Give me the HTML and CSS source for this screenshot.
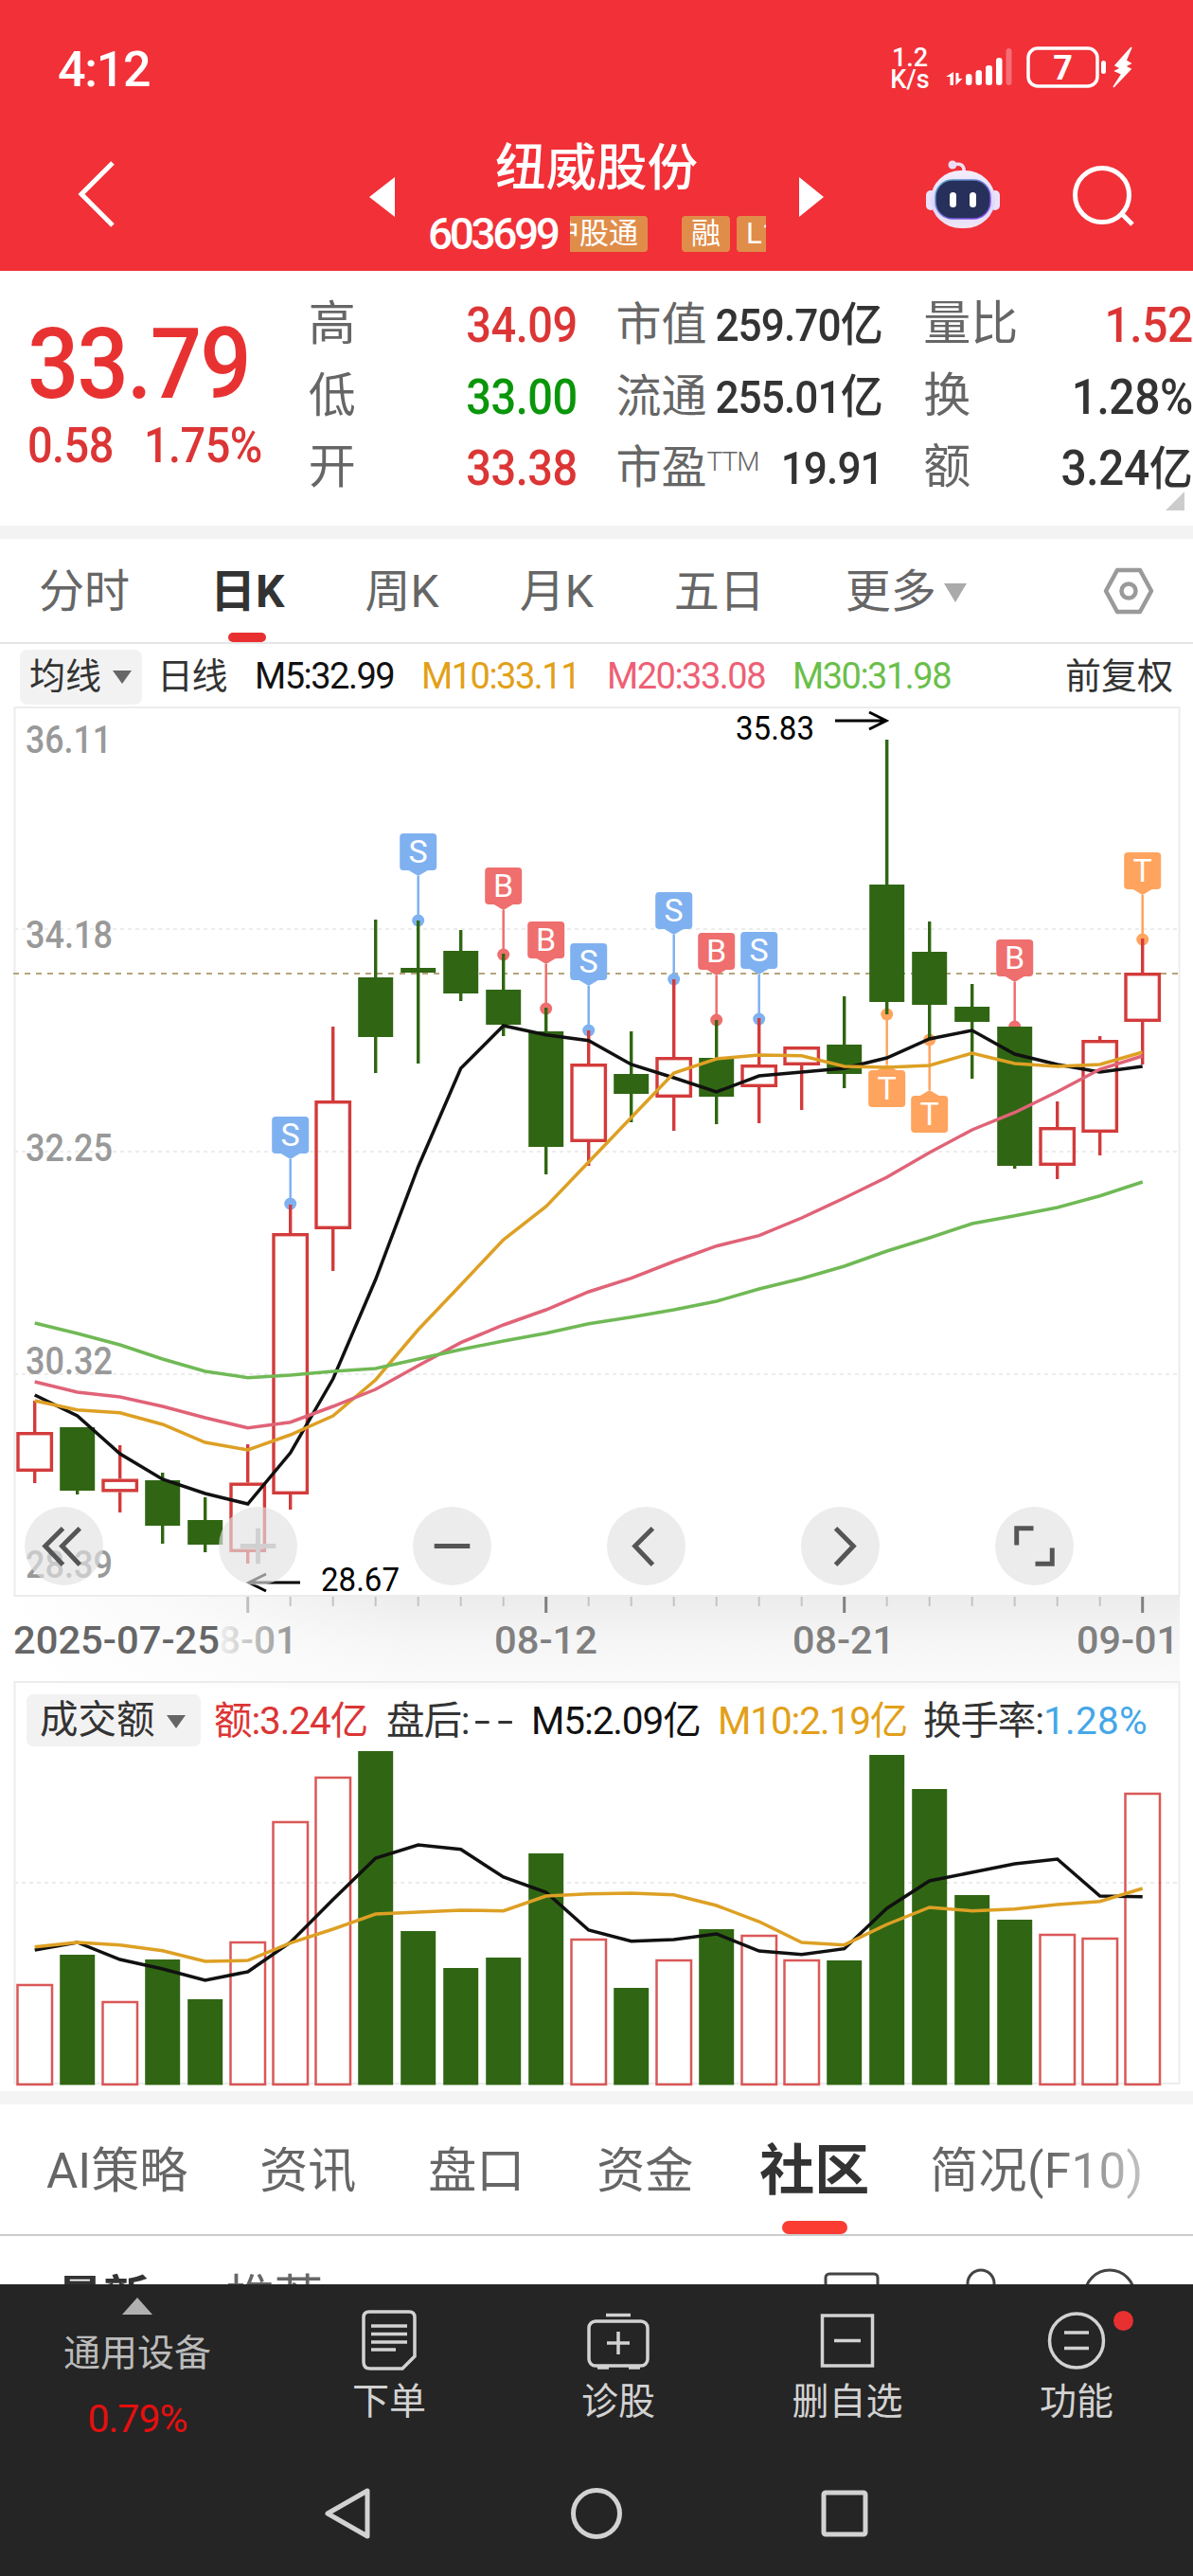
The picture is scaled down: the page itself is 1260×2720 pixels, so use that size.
FILE: index.html
```html
<!DOCTYPE html>
<html lang="zh-CN">
<head>
    <meta charset="UTF-8">
    <meta name="viewport" content="width=device-width, initial-scale=1.0">
    <title>纽威股份 603699</title>
    <link rel="stylesheet" href="styles.css">
</head>
<body>
<div class="app">

    <header class="header">
        <div class="status">
            <span class="clock">4:12</span>
            <span class="speed">1.2<br>K/s</span>
            <svg class="status-icons" width="205" height="50" viewBox="0 0 205 50">
                <g fill="#fff">
                    <path d="M4.500 41V32H0L8 27V41zM10.500 28v13l7-7h-4v-6z"/>
                    <rect x="21" y="29" width="6.500" height="12" rx="3"/>
                    <rect x="31.500" y="25" width="6.500" height="16" rx="3"/>
                    <rect x="42" y="20" width="7" height="21" rx="3"/>
                    <rect x="53" y="12" width="6.500" height="29" rx="3"/>
                    <rect x="63.500" y="2" width="6" height="39" rx="3" opacity=".3"/>
                    <rect x="164" y="15" width="5" height="14" rx="2.500"/>
                    <path d="M196 1L179 20l6 3-6 3 7 3-9 14 18-19-6-3 6-3-5-3z" stroke="#fff" stroke-width="1.500"/>
                </g>
                <rect x="87" y="2" width="73" height="40" rx="10" fill="none" stroke="#fff" stroke-width="3.500"/>
                <text x="123.500" y="35" text-anchor="middle" class="battery-text">7</text>
            </svg>
        </div>
        <div class="titlebar">
            <svg class="back" width="46" height="76" viewBox="0 0 46 76"><path d="M38 5L5 38l33 33" fill="none" stroke="#fff" stroke-width="5"/></svg>
            <svg class="prev" width="28" height="42" viewBox="0 0 28 42"><path d="M27 0v42L0 21z" fill="#fff"/></svg>
            <div class="stock">
                <div class="stock-name">纽威股份</div>
                <div class="stock-sub">
                    <span class="code">603699</span>
                    <span class="tag tag-first">沪股通</span>
                    <span class="tag">融</span>
                    <span class="tag tag-last">L1</span>
                </div>
            </div>
            <svg class="next" width="28" height="42" viewBox="0 0 28 42"><path d="M1 0v42l26-21z" fill="#fff"/></svg>
            <svg class="robot" width="80" height="74" viewBox="0 0 80 74">
                <defs>
                    <linearGradient id="shell" x1="0" y1="0" x2="0" y2="1"><stop offset="0" stop-color="#f4eefb"/><stop offset=".6" stop-color="#dcd6fa"/><stop offset="1" stop-color="#f0e6f4"/></linearGradient>
                    <linearGradient id="rim" x1="0" y1="0" x2="1" y2="1"><stop offset="0" stop-color="#4fa3c0"/><stop offset="1" stop-color="#8a3df0"/></linearGradient>
                </defs>
                <path d="M30 6c7-2 12 0 11 8" fill="none" stroke="#f0dff0" stroke-width="3.500"/>
                <circle cx="29" cy="6" r="4.500" fill="#eadcf5"/>
                <rect x="1" y="33" width="10" height="21" rx="5" fill="#e9e2fb"/>
                <rect x="69" y="33" width="10" height="21" rx="5" fill="#e9e2fb"/>
                <rect x="6" y="12" width="68" height="61" rx="32" fill="url(#shell)"/>
                <rect x="11" y="22" width="58" height="41" rx="18" fill="#27305a" stroke="url(#rim)" stroke-width="1.500"/>
                <rect x="26" y="35" width="7" height="16" rx="3.500" fill="#fff"/>
                <rect x="47" y="35" width="7" height="16" rx="3.500" fill="#fff"/>
            </svg>
            <svg class="search" width="68" height="68" viewBox="0 0 68 68"><g fill="none" stroke="#fff" stroke-width="5"><circle cx="32" cy="33" r="28.500"/><path d="M53 53l11 11"/></g></svg>
        </div>
    </header>

    <section class="quote">
        <div class="quote-main">
            <div class="price">33.79</div>
            <div class="change"><span>0.58</span><span>1.75%</span></div>
        </div>
        <dl class="quote-col col-a">
            <dt>高</dt><dd class="up">34.09</dd>
            <dt>低</dt><dd class="down">33.00</dd>
            <dt>开</dt><dd class="up">33.38</dd>
        </dl>
        <dl class="quote-col col-b">
            <dt>市值</dt><dd>259.70<b>亿</b></dd>
            <dt>流通</dt><dd>255.01<b>亿</b></dd>
            <dt>市盈<sup>TTM</sup></dt><dd>19.91</dd>
        </dl>
        <dl class="quote-col col-c">
            <dt>量比</dt><dd class="up">1.52</dd>
            <dt>换</dt><dd>1.28%</dd>
            <dt>额</dt><dd>3.24<b>亿</b></dd>
        </dl>
        <i class="corner"></i>
    </section>

    <nav class="period">
        <span>分时</span>
        <span class="active">日K</span>
        <span>周K</span>
        <span>月K</span>
        <span>五日</span>
        <span class="more">更多<i class="caret"></i></span>
        <svg class="gear" width="54" height="54" viewBox="0 0 54 54"><g fill="none" stroke="#9a9a9a" stroke-width="4.500" stroke-linejoin="round"><path d="M15 5h24l12 22-12 22H15L3 27z"/><circle cx="27" cy="27" r="7.500"/></g></svg>
    </nav>

    <div class="legend ma-legend">
        <span class="select">均线<i class="caret"></i></span>
        <span>日线</span>
        <span class="m5">M5:32.99</span>
        <span class="m10">M10:33.11</span>
        <span class="m20">M20:33.08</span>
        <span class="m30">M30:31.98</span>
        <span class="adjust">前复权</span>
    </div>

    <div class="chart">
        <svg id="kline" width="1260" height="1029" viewBox="0 746 1260 1029"></svg>
        <div class="controls">
            <button><svg viewBox="0 0 84 84"><path d="M41 23L22 42l19 20M59 23L40 42l19 20"/></svg></button>
            <button class="dim"><svg viewBox="0 0 84 84"><path d="M23 42h38M42 23v38"/></svg></button>
            <button><svg viewBox="0 0 84 84"><path d="M23 42h38"/></svg></button>
            <button><svg viewBox="0 0 84 84"><path d="M49 23L30 42l19 20"/></svg></button>
            <button><svg viewBox="0 0 84 84"><path d="M37 23l19 19-19 20"/></svg></button>
            <button><svg viewBox="0 0 84 84"><path d="M23 41V23h18M61 44v17H43"/></svg></button>
        </div>
    </div>

    <div class="volume">
        <div class="legend vol-legend">
            <span class="select">成交额<i class="caret"></i></span>
            <span class="up">额:3.24亿</span>
            <span>盘后:<em class="dashes">--</em></span>
            <span class="m5">M5:2.09亿</span>
            <span class="m10">M10:2.19亿</span>
            <span>换手率:<em class="rate">1.28%</em></span>
        </div>
        <svg id="volume" width="1260" height="362" viewBox="0 1846 1260 362"></svg>
    </div>

    <nav class="sections">
        <span>AI策略</span>
        <span>资讯</span>
        <span>盘口</span>
        <span>资金</span>
        <span class="active">社区</span>
        <span class="fade">简况(F10)</span>
    </nav>

    <div class="community">
        <b>最新</b>
        <span>推荐</span>
        <svg width="330" height="50" viewBox="0 0 330 50"><g fill="none" stroke="#444" stroke-width="3"><rect x="12" y="3" width="55" height="42" rx="4"/><circle cx="176" cy="13" r="14"/><circle cx="312" cy="25" r="26"/></g></svg>
    </div>

    <footer class="footer">
        <div class="toolbar">
            <div class="board">
                <i class="up-caret"></i>
                <span>通用设备</span>
                <span class="board-change">0.79%</span>
            </div>
            <div class="tool">
                <svg width="70" height="66" viewBox="0 0 70 66"><path d="M14 4h42q6 0 6 6v41L49 64H15q-7 0-7-7V10q0-6 6-6zM16 19h38M16 27.500h38M16 36h38M16 44h26"/></svg>
                <span>下单</span>
            </div>
            <div class="tool">
                <svg width="70" height="66" viewBox="0 0 70 66"><rect x="4" y="14" width="62" height="47" rx="7"/><path d="M22 7.500h26M35 25v24M23 37h24M13 63h12M46 63h12"/></svg>
                <span>诊股</span>
            </div>
            <div class="tool">
                <svg width="70" height="66" viewBox="0 0 70 66"><path d="M8.500 8h53v53h-53zM21 34.500h28"/></svg>
                <span>删自选</span>
            </div>
            <div class="tool">
                <svg width="70" height="66" viewBox="0 0 70 66"><circle cx="35" cy="34.500" r="28.500"/><path d="M22 26h26M22 42.500h26"/></svg>
                <i class="dot"></i>
                <span>功能</span>
            </div>
        </div>
        <div class="sysnav">
            <svg width="60" height="60" viewBox="0 0 60 60"><path d="M50 6v48L8 30z" stroke-linejoin="round"/></svg>
            <svg width="60" height="60" viewBox="0 0 60 60"><circle cx="30" cy="30" r="24.500"/></svg>
            <svg width="60" height="60" viewBox="0 0 60 60"><rect x="8" y="8" width="44" height="44" rx="2"/></svg>
        </div>
    </footer>
</div>
<script src="script.js"></script>
</body>
</html>
```
FILE: styles.css
```css
* {
    box-sizing: border-box;
}
body {
    margin: 0;
    background: #fff;
    font-family: Roboto, "Noto Sans CJK SC", sans-serif;
    color: #333;
}
.app {
    width: 1260px;
    height: 2720px;
    overflow: hidden;
    display: flex;
    flex-direction: column;
}
.app > * {
    flex-shrink: 0;
}
svg {
    display: block;
    overflow: visible;
}
i, em {
    font-style: normal;
}
.up { color: #dc3535; }
.down { color: #0a960a; }
.m5 { color: #111; }
.m10 { color: #e2a019; }
.m20 { color: #ee6074; }
.m30 { color: #6abf4b; }

/* header */
.header {
    height: 286px;
    background: #f13038;
    color: #fff;
}
.status {
    height: 146px;
    padding: 49px 0 0 61px;
    display: flex;
    align-items: flex-start;
}
.clock {
    width: 880px;
    font-size: 52px;
    font-weight: 500;
    line-height: 50px;
    letter-spacing: -1.3px;
}
.speed {
    width: 58px;
    font-size: 27px;
    font-weight: 500;
    line-height: 23px;
    text-align: center;
    margin-left: -9px;
    padding-top: 1px;
    margin-right: 9px;
}
.battery-text {
    fill: #fff;
    font-size: 36px;
    font-weight: 700;
}
.titlebar {
    height: 140px;
    display: flex;
    align-items: flex-start;
    padding-left: 81px;
}
.back { margin-top: 21px; }
.prev { margin: 41px 0 0 263px; }
.stock {
    width: 425px;
    padding-left: 34px;
}
.stock-name {
    height: 80px;
    line-height: 63px;
    font-size: 53.5px;
    font-weight: 500;
    text-align: center;
    padding-right: 35px;
}
.stock-sub {
    display: flex;
    height: 38px;
    margin-top: 2px;
    align-items: center;
}
.code {
    width: 150px;
    font-size: 46px;
    font-weight: 500;
    letter-spacing: -3.4px;
}
.tag {
    height: 38px;
    line-height: 37px;
    padding: 0 10px;
    margin-right: 7px;
    font-size: 31px;
    background: #e08d4a;
    border-radius: 4px;
    white-space: nowrap;
}
.tag-first {
    width: 82px;
    margin-right: 36px;
    display: flex;
    justify-content: flex-end;
    overflow: hidden;
    border-radius: 0 4px 4px 0;
}
.tag-last {
    width: 31px;
    overflow: hidden;
    border-radius: 4px 0 0 4px;
}
.next { margin-top: 41px; }
.robot { margin: 22px 0 0 106px; }
.search { margin: 27px 0 0 75px; }

/* quote */
.quote {
    position: relative;
    height: 283px;
    border-bottom: 14px solid #f3f3f3;
    display: flex;
}
.quote-main {
    width: 326px;
    padding: 40px 0 0 29px;
    color: #e83232;
}
/* figures are drawn a little narrow */
.price, .change span, .quote-col dd {
    transform: scaleX(.92);
    transform-origin: left;
}
.price {
    font-size: 104px;
    font-weight: 500;
    line-height: 118px;
    letter-spacing: -2px;
}
.change {
    display: flex;
    gap: 24px;
    color: #dc3535;
    font-size: 51px;
    font-weight: 500;
    letter-spacing: -.6px;
    line-height: 54px;
}
.quote-col {
    margin: 16px 0 0;
    display: grid;
    grid-template-columns: 100px 1fr;
    grid-auto-rows: 75.5px;
    line-height: 75.5px;
    font-size: 50px;
}
.quote-col dt {
    color: #666;
    white-space: nowrap;
    padding-top: 3px;
}
.quote-col dd {
    margin: 0;
    text-align: right;
    font-weight: 500;
    font-size: 51px;
    letter-spacing: -.5px;
    padding-top: 4px;
    white-space: nowrap;
    transform-origin: right;
}
.quote-col b {
    font-size: 49px;
    font-weight: 500;
    letter-spacing: 0;
}
.col-a { width: 284px; }
.col-b {
    grid-template-columns: 80px 1fr;
    width: 283px;
    margin-left: 41px;
    font-size: 48px;
}
.col-b dd {
    font-size: 48px;
    letter-spacing: -1px;
}
.col-b sup {
    font-size: 28px;
    line-height: 0;
    font-weight: 300;
    vertical-align: 13px;
    letter-spacing: -1px;
}
.col-c {
    width: 285px;
    margin-left: 42px;
}
.col-c dd {
    transform: scaleX(.94);
}
.corner {
    position: absolute;
    right: 9px;
    bottom: 16px;
    border-left: 20px solid transparent;
    border-bottom: 20px solid #ccc;
}

/* period tabs */
.period {
    height: 111px;
    border-bottom: 2px solid #e6e6e6;
    padding-left: 41px;
    display: flex;
    align-items: center;
    gap: 85px;
    font-size: 48px;
    color: #666;
}
.period span {
    line-height: 109px;
    position: relative;
    padding-top: 1px;
    height: 109px;
}
.period .active {
    font-weight: 700;
    color: #333;
}
.period .active::after {
    content: "";
    position: absolute;
    left: 50%;
    bottom: 0;
    width: 40px;
    height: 10px;
    margin-left: -20px;
    border-radius: 5px;
    background: #e83030;
}
.caret {
    display: inline-block;
    border: 10px solid transparent;
    border-top: 14px solid #666;
    border-bottom: 0;
    vertical-align: middle;
    margin: -3px 0 0 12px;
}
.more .caret {
    border-width: 20px 12px 0;
    border-top-color: #aaa;
    margin: -4px 0 0 8px;
}
.gear { margin: 0 0 0 59px; }

/* indicator legends */
.legend {
    white-space: nowrap;
    align-items: center;
}
.select {
    background: #f2f2f2;
    border-radius: 8px;
    letter-spacing: 0;
}
.ma-legend {
    height: 66px;
    padding: 3px 0 0 21px;
    display: grid;
    grid-template-columns: 145px 103px 176px 196px 196px 288px 1fr;
    font-size: 38px;
    letter-spacing: -1.5px;
    line-height: 54px;
}
.ma-legend > span:not(.select) {
    padding-bottom: 2px;
}
.ma-legend .select {
    width: 129px;
    height: 58px;
    line-height: 57px;
    padding-left: 10px;
}
.ma-legend .adjust { letter-spacing: 0; }

/* kline */
.chart {
    position: relative;
    height: 1029px;
}
.controls {
    position: absolute;
    left: 26px;
    top: 845px;
    display: flex;
    gap: 122px;
}
.controls button {
    width: 83px;
    height: 83px;
    padding: 0;
    border: 0;
    border-radius: 50%;
    background: rgba(226, 226, 226, .65);
}
.controls path {
    fill: none;
    stroke: #555;
    stroke-width: 5;
}
.controls .dim path { stroke: #d0d0d0; }
.axis {
    font-size: 40px;
    fill: #999;
    font-weight: 500;
}
.date { fill: #808080; }
.extreme {
    font-size: 35px;
    fill: #000;
}
.flag {
    font-size: 34px;
    fill: #fff;
    text-anchor: middle;
}

/* volume */
.volume {
    position: relative;
    height: 447px;
    border-bottom: 14px solid #f4f4f4;
}
.vol-legend {
    height: 71px;
    padding: 12px 0 0 28px;
    display: grid;
    grid-template-columns: 198px 182px 153px 197px 217px 1fr;
    font-size: 40.5px;
    line-height: 56px;
    letter-spacing: -1.1px;
}
.vol-legend .select {
    width: 184px;
    height: 55px;
    line-height: 55px;
    padding-left: 14px;
    border-radius: 7px;
}
.dashes {
    display: inline-block;
    transform: scaleX(1.5);
    transform-origin: left;
    letter-spacing: 5px;
    margin-left: 5px;
}
.rate {
    color: #45a7e8;
    letter-spacing: .3px;
}

/* section tabs */
.sections {
    height: 139px;
    border-bottom: 2px solid #ccc;
    padding-left: 49px;
    display: flex;
    gap: 76px;
    line-height: 141px;
    font-size: 51px;
    color: #666;
    white-space: nowrap;
}
.sections .active {
    position: relative;
    font-size: 58px;
    font-weight: 700;
    color: #333;
    margin: 0 -12px 0 -6px;
}
.sections .active::after {
    content: "";
    position: absolute;
    left: 50%;
    bottom: 0;
    width: 69px;
    height: 14px;
    margin-left: -34px;
    border-radius: 7px;
    background: #fa3c32;
}
.sections .fade {
    letter-spacing: .4px;
    background: linear-gradient(90deg, #666 55%, #c4c4c4);
    -webkit-background-clip: text;
    background-clip: text;
    color: transparent;
}
.community {
    height: 51px;
    overflow: hidden;
    padding: 37px 0 0 60px;
    display: flex;
    font-size: 49px;
    line-height: 58px;
}
.community b { width: 179px; }
.community span {
    width: 621px;
    font-size: 51px;
    color: #666;
}

/* footer */
.footer {
    height: 308px;
    background: #252525;
    color: #d2d2d2;
    font-size: 39px;
}
.footer svg {
    fill: none;
    stroke: #d2d2d2;
    stroke-width: 3.5;
}
.toolbar {
    height: 180px;
    display: grid;
    grid-template-columns: 290px 242px 242px 242px 242px;
}
.board {
    display: flex;
    flex-direction: column;
    align-items: center;
    padding: 14px 0 0;
    color: #bbb;
}
.board span {
    line-height: 56px;
    margin-top: 13px;
}
.board .board-change {
    color: #e60f0f;
    font-size: 41px;
    letter-spacing: -1px;
}
.up-caret {
    border: 16px solid transparent;
    border-bottom: 18px solid #b0b0b0;
    border-top: 0;
}
.tool {
    position: relative;
    display: flex;
    flex-direction: column;
    align-items: center;
    padding-top: 25px;
}
.tool span {
    line-height: 56px;
    margin-top: 5px;
}
.dot {
    position: absolute;
    left: 160px;
    top: 28px;
    width: 21px;
    height: 21px;
    border-radius: 50%;
    background: #e83030;
}
.sysnav {
    display: flex;
    padding: 32px 0 0 338px;
    gap: 202px;
}
.sysnav svg { stroke-width: 5; }
```
FILE: script.js
```js
const RED = '#d33b3b', GREEN = '#306613';
const X0 = 36.7, STEP = 45;
const cx = i => X0 + STEP * i;

// [color, high, body top, body bottom, low]
const candles = [
    ['r', 1479, 1512, 1554, 1566], ['g', 1507, 1507, 1574, 1578], ['r', 1526, 1561.5, 1575.5, 1597],
    ['g', 1555, 1563, 1611, 1630], ['g', 1581, 1605, 1631, 1639], ['r', 1525, 1565.5, 1639, 1651],
    ['r', 1272, 1302, 1578, 1594], ['r', 1084, 1162, 1298, 1342], ['g', 971, 1032, 1095, 1133],
    ['g', 972, 1022, 1027, 1123], ['g', 982, 1004, 1049, 1057], ['g', 1007, 1045, 1082, 1094],
    ['g', 1064, 1089, 1211, 1240], ['r', 1088, 1123, 1206, 1231], ['g', 1089, 1134, 1155, 1185],
    ['r', 1034, 1116, 1159, 1194], ['g', 1077, 1117, 1158, 1187], ['r', 1075, 1124, 1148, 1186],
    ['r', 1105, 1105, 1125, 1172], ['g', 1052, 1103, 1134, 1149], ['g', 781, 934, 1058, 1071],
    ['g', 973, 1005, 1061, 1096], ['g', 1039, 1063, 1079, 1139], ['g', 1084, 1084, 1231, 1234],
    ['r', 1163, 1190, 1231, 1245], ['r', 1094, 1098, 1196, 1220], ['r', 991, 1027, 1079, 1124]
];

const averages = [
    ['#111', [1473, 1495, 1535, 1562, 1577, 1588, 1534, 1456, 1351, 1232, 1128, 1083, 1092.7, 1098.7, 1124, 1138, 1153, 1136, 1132, 1128, 1117, 1097, 1088, 1113, 1124, 1132, 1126]],
    ['#dda024', [1479, 1488.7, 1491.7, 1504, 1523, 1531, 1515, 1495, 1457, 1404, 1356.7, 1309, 1274, 1227, 1180, 1133, 1118, 1114, 1114.7, 1126, 1127, 1125, 1112, 1123, 1126, 1124, 1111]],
    ['#e06377', [1459, 1470, 1475, 1485, 1497, 1507.7, 1501.7, 1485, 1467, 1442, 1417.7, 1399, 1383, 1364, 1349.7, 1332, 1315.7, 1304.7, 1286, 1265, 1243, 1217, 1193, 1174.7, 1152.7, 1129, 1115]],
    ['#70b955', [1397, 1408, 1420, 1435, 1448, 1454.7, 1452, 1448, 1445, 1435, 1425, 1416, 1407.7, 1397.7, 1390.7, 1383, 1374, 1361, 1350, 1337, 1321, 1307, 1292, 1283.7, 1275, 1262.7, 1248]]
];

// [candle, letter, box top, dot]
const flags = [
    [6, 'S', 1179, 1271], [9, 'S', 880, 972], [11, 'B', 916, 1008], [12, 'B', 973, 1065],
    [13, 'S', 996, 1088], [15, 'S', 942, 1034], [16, 'B', 985, 1077], [17, 'S', 984, 1076],
    [20, 'T', 1130, 1071], [21, 'T', 1157, 1098], [23, 'B', 992, 1084], [26, 'T', 900, 992]
];
const flagColor = { S: '#7fb1f0', B: '#ef6e6e', T: '#fea45e' };

const volumes = [
    ['r', 2096], ['g', 2064], ['r', 2114], ['g', 2069], ['g', 2111], ['r', 2051], ['r', 1924],
    ['r', 1877], ['g', 1849], ['g', 2039], ['g', 2078], ['g', 2067], ['g', 1957], ['r', 2048],
    ['g', 2099], ['r', 2070], ['g', 2037], ['r', 2044], ['r', 2070], ['g', 2070], ['g', 1853],
    ['g', 1889], ['g', 2001], ['g', 2027], ['r', 2043], ['r', 2047], ['r', 1894]
];
const volAverages = [
    ['#111', [2059, 2051, 2069, 2079, 2091, 2082, 2051, 2005.7, 1962, 1948, 1952.7, 1982, 1998, 2038, 2049.7, 2048, 2042, 2060, 2063.7, 2057.7, 2015, 1986, 1977, 1968, 1963, 2002, 2002.7]],
    ['#dda024', [2055.7, 2051, 2053.7, 2059.7, 2071, 2070, 2051.7, 2037, 2021, 2019, 2017, 2017.7, 2002, 1999.7, 1999, 2000.7, 2012, 2029, 2051, 2053.7, 2032, 2014, 2017.7, 2015.7, 2011, 2007.7, 1994]]
];

function line(x1, y1, x2, y2, color, width, dash) {
    return `<line x1="${x1}" y1="${y1}" x2="${x2}" y2="${y2}" stroke="${color}" stroke-width="${width}"${dash ? ` stroke-dasharray="${dash}"` : ''}/>`;
}
function label(x, y, width, text, cls, fill) {
    return `<text x="${x}" y="${y}" textLength="${width}" lengthAdjust="spacingAndGlyphs" class="${cls}"${fill ? ` style="fill:${fill}"` : ''}>${text}</text>`;
}
function curve([color, ys]) {
    return `<polyline points="${ys.map((y, i) => cx(i) + ',' + y).join(' ')}" fill="none" stroke="${color}" stroke-width="3.500"/>`;
}

function drawKline() {
    let s = `<defs>
        <linearGradient id="down" x1="0" y1="0" x2="0" y2="1"><stop offset="0" stop-color="#ececec"/><stop offset=".5" stop-color="#f6f6f6"/><stop offset="1" stop-color="#fbfbfb"/></linearGradient>
        <linearGradient id="left"><stop offset="0" stop-color="#fff"/><stop offset=".5" stop-color="#fff" stop-opacity=".6"/><stop offset="1" stop-color="#fff" stop-opacity="0"/></linearGradient>
        <linearGradient id="dateFade" gradientUnits="userSpaceOnUse" x1="230" x2="325"><stop offset="0" stop-color="#fff" stop-opacity="0"/><stop offset=".05" stop-color="#ececec"/><stop offset=".5" stop-color="#b4b4b4"/><stop offset="1" stop-color="#888"/></linearGradient>
    </defs>
    <rect x="15" y="1686" width="1231" height="97" fill="url(#down)"/>
    <rect x="15" y="1686" width="420" height="97" fill="url(#left)"/>
    <rect x="15.500" y="747" width="1230" height="938" fill="none" stroke="#ececec" stroke-width="2"/>`;
    for (const y of [981, 1216, 1451]) s += line(15, y, 1245, y, '#ececec', 2, '4 4');
    s += line(14, 1028, 1245, 1028, '#b5a57b', 2, '6 6');

    const ys = [[36.11, 794.7], [34.18, 1000.7], [32.25, 1225.7], [30.32, 1451], [28.39, 1666]];
    for (const [v, y] of ys) s += label(27, y, v === 36.11 ? 91 : 92, v, 'axis');

    for (let i = 5; i < 27; i++) {
        const major = (i - 5) % 7 === 0;
        s += line(cx(i), 1686, cx(i), major ? 1703 : 1696, i === 5 ? '#c0c0c0' : major ? '#808080' : '#c4c4c4', major ? 3 : 2);
    }
    s += label(14, 1745.7, 218, '2025-07-25', 'axis', '#666');
    s += label(208, 1745.7, 106, '08-01', 'axis', 'url(#dateFade)');
    s += label(522, 1745.7, 109, '08-12', 'axis date');
    s += label(837, 1745.7, 108, '08-21', 'axis date');
    s += label(1137, 1745.7, 108, '09-01', 'axis date');

    for (const [i, t, top, dot] of flags) {
        const x = cx(i), c = flagColor[t], below = top > dot;
        const edge = below ? top : top + 39, tip = below ? top - 6 : top + 45;
        s += line(x, tip, x, dot, c, 2.5) + `<circle cx="${x}" cy="${dot}" r="6.500" fill="${c}"/>`;
        s += `<path d="M${x - 10} ${edge}L${x} ${tip}L${x + 10} ${edge}z" fill="${c}"/>`;
        s += `<rect x="${x - 19.5}" y="${top}" width="39" height="39" rx="4" fill="${c}"/>`;
        s += `<text x="${x}" y="${top + 31}" class="flag">${t}</text>`;
    }

    candles.forEach(([c, high, top, bottom, low], i) => {
        const x = cx(i), color = c === 'r' ? RED : GREEN;
        s += line(x, high, x, top, color, 3.4) + line(x, bottom, x, low, color, 3.4);
        s += c === 'r'
            ? `<rect x="${x - 17.7}" y="${top + 1.7}" width="35.400" height="${bottom - top - 3.4}" fill="none" stroke="${RED}" stroke-width="3.400"/>`
            : `<rect x="${x - 18.5}" y="${top}" width="37" height="${bottom - top}" fill="${GREEN}"/>`;
    });
    s += averages.map(curve).join('');

    s += label(777, 781, 83, '35.83', 'extreme') + label(339, 1680, 83, '28.67', 'extreme');
    s += `<path d="M882 761h54M918 752l18 9-18 9M317 1671h-54M281 1662l-18 9 18 9" fill="none" stroke="#000" stroke-width="3"/>`;
    document.getElementById('kline').innerHTML = s;
}

function drawVolume() {
    let s = `<rect x="15.500" y="1776" width="1230" height="424" fill="none" stroke="#ececec" stroke-width="2"/>`;
    s += line(15, 1988, 1245, 1988, '#ececec', 2, '4 4');
    volumes.forEach(([c, top], i) => {
        const x = cx(i);
        s += c === 'r'
            ? `<rect x="${x - 18.2}" y="${top}" width="36.500" height="${2201 - top}" fill="none" stroke="${RED}" stroke-opacity=".85" stroke-width="2.500"/>`
            : `<rect x="${x - 18.5}" y="${top}" width="37" height="${2201.5 - top}" fill="${GREEN}"/>`;
    });
    s += volAverages.map(curve).join('');
    document.getElementById('volume').innerHTML = s;
}

drawKline();
drawVolume();
```
